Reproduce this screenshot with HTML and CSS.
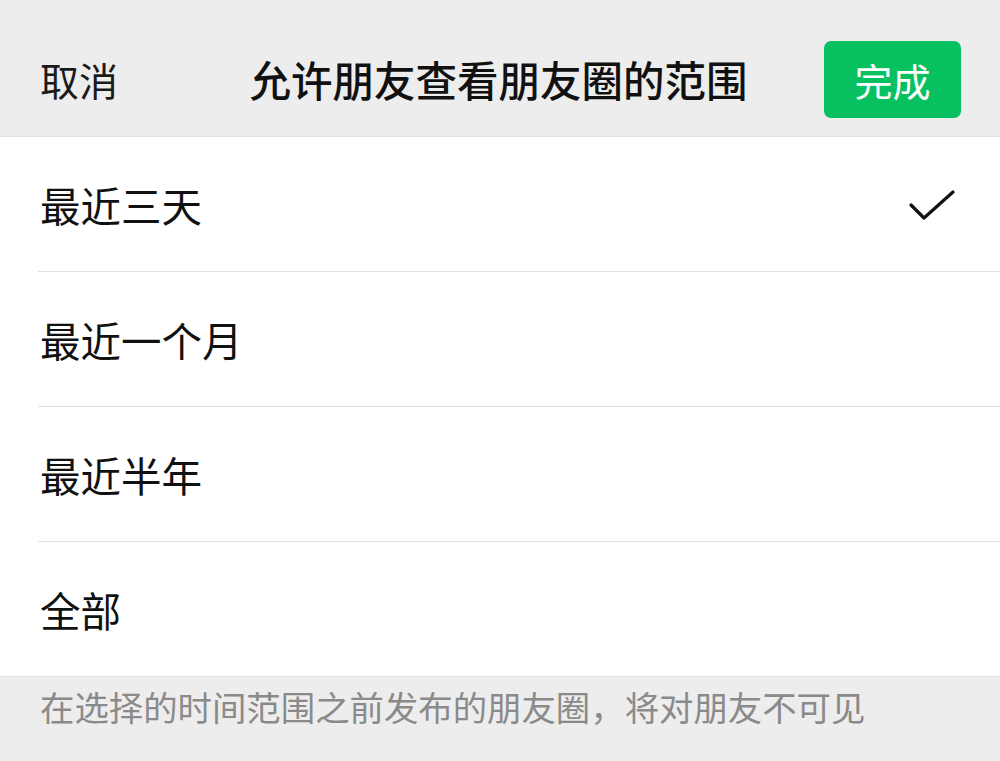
FILE: index.html
```html
<!DOCTYPE html>
<html lang="zh-CN">

<head>
  <meta charset="UTF-8">
  <meta name="viewport" content="width=device-width, initial-scale=1.0">
  <title>朋友圈范围</title>
  <link rel="stylesheet" href="styles.css">
</head>

<body>
  <div class="header">
    <span class="cancel">取消</span>
    <span class="title">允许朋友查看朋友圈的范围</span>
    <button class="done">完成</button>
  </div>

  <div class="list">
    <div class="row">
      <span>最近三天</span>
      <svg class="check" width="48" height="34" viewBox="0 0 48 34">
        <path d="M3 16 L16 29 L45 3" fill="none" stroke="#111" stroke-width="3.2" stroke-linecap="round" stroke-linejoin="round" />
      </svg>
    </div>
    <div class="row"><span>最近一个月</span></div>
    <div class="row"><span>最近半年</span></div>
    <div class="row"><span>全部</span></div>
  </div>

  <div class="tip">在选择的时间范围之前发布的朋友圈，将对朋友不可见</div>
</body>

</html>
```

FILE: styles.css
```css
body {
  margin: 0;
  background: #ededed;
  font-family: "Noto Sans CJK SC", "Noto Sans", sans-serif;
  color: #111;
}

.header {
  height: 114px;
  padding: 22px 39px 0 40px;
  border-bottom: 1px solid #e2e2e2;
  display: grid;
  grid-template-columns: 1fr auto 1fr;
  align-items: center;
}

.cancel {
  font-size: 39px;
  color: #1a1a1a;
}

.title {
  font-size: 41.5px;
  font-weight: 500;
  margin-left: -4px;
}

.done {
  justify-self: end;
  width: 137px;
  height: 77px;
  border: none;
  border-radius: 7px;
  background: #07c160;
  color: #fff;
  font-family: inherit;
  font-size: 38px;
  padding: 0;
}

.list {
  background: #fff;
  border-bottom: 1px solid #dcdcdc;
}

.row {
  height: 134px;
  margin-left: 38px;
  padding: 0 44px 0 2px;
  border-bottom: 1px solid #e2e2e2;
  display: flex;
  align-items: center;
  justify-content: space-between;
  font-size: 40.5px;
}

.row:last-child {
  border-bottom: none;
}

.check {
  margin-top: 4px;
}

.tip {
  padding: 4px 40px;
  font-size: 34.4px;
  color: #8a8a8a;
}
```
